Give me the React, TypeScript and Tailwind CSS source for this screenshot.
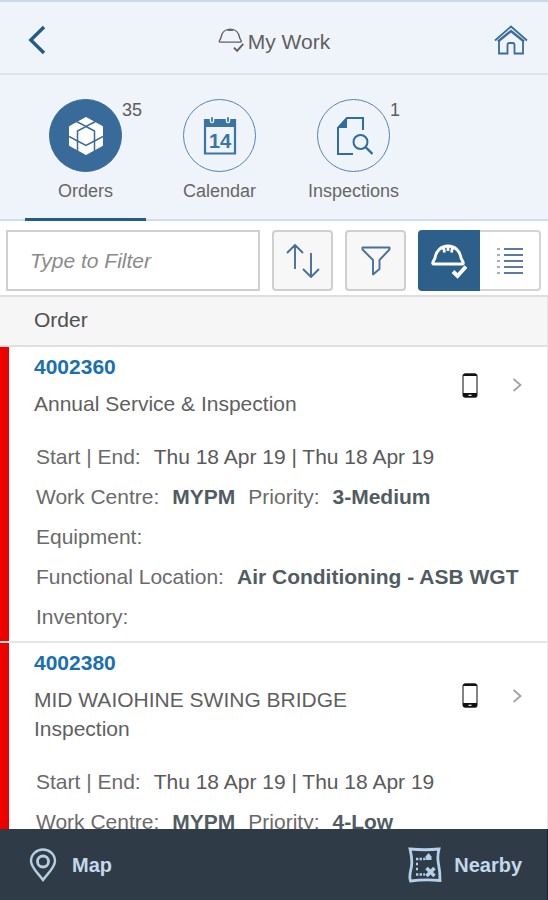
import type { ReactNode } from "react"

type Order = {
  id: string
  title: string
  dates: string
  workCentre: string
  priority: string
  asset?: { equipment: string; location: string; inventory: string }
}

const orders: Order[] = [
  {
    id: "4002360",
    title: "Annual Service & Inspection",
    dates: "Thu 18 Apr 19 | Thu 18 Apr 19",
    workCentre: "MYPM",
    priority: "3-Medium",
    asset: { equipment: "", location: "Air Conditioning - ASB WGT", inventory: "" },
  },
  {
    id: "4002380",
    title: "MID WAIOHINE SWING BRIDGE Inspection",
    dates: "Thu 18 Apr 19 | Thu 18 Apr 19",
    workCentre: "MYPM",
    priority: "4-Low",
  },
]

function BackIcon() {
  return (
    <svg width="18" height="30" viewBox="0 0 18 30" fill="none" stroke="#245a85" strokeWidth="3.4">
      <path d="M16 2 2.8 15 16 28" />
    </svg>
  )
}

function HomeIcon() {
  return (
    <svg width="34" height="30" viewBox="0 0 34 30" fill="none" stroke="#3a6c97" strokeWidth="1.8">
      <path d="M1 15.5 17 1.500l16 14" />
      <path d="M5 16v12.500h8.500V20q0-2 2-2h3q2 0 2 2v8.500H29V16" />
      <path d="M4 16.500 17 6l13 10.500" strokeWidth="2.400" />
    </svg>
  )
}

// plain dome for the title, ribbed one for the toolbar
function HelmetIcon({ size, stroke, ribs }: { size: number; stroke: number; ribs?: boolean }) {
  return (
    <svg width={size} height={size} viewBox="0 0 36 36" fill="none" stroke="currentColor" strokeWidth={stroke} strokeLinejoin="round">
      <path d="M4 15C5 8 10 3 17 3s12 5 13 12l2 4q1 2-1 2H3q-2 0-1-2z" />
      <path d={ribs ? "M12.500 4.500l1 5M17 3v5M21.500 4.500l-1 5" : "M13 4.500h8"} />
      <path d="m22 28.500 4.500 4.500 8.500-9.500" strokeWidth={stroke * 1.4} strokeLinejoin="miter" />
    </svg>
  )
}

function OrdersIcon() {
  return (
    <svg width="34" height="38" viewBox="0 0 34 38">
      <path d="M17 .5 33.500 9.500v19L17 37.500.5 28.500v-19z" fill="#fff" stroke="#fff" strokeLinejoin="round" />
      <g fill="none" stroke="#386b9a" strokeWidth="1.500">
        <path d="M7.500 4.500 17 9.500l9.500-5" />
        <path d="M17 9.500 25.500 14v10L17 28.500 8.500 24V14z" />
        <path d="M0 19.500 8.500 24v10M34 19.500 25.500 24v10" />
      </g>
    </svg>
  )
}

function CalendarIcon() {
  return (
    <svg width="34" height="38" viewBox="0 0 34 38">
      <path d="M2 3h30v33.500H2z" fill="none" stroke="#3a74a6" strokeWidth="2.200" />
      <path d="M1 2h32v8H1z" fill="#3a74a6" />
      <path d="M9 0v4M25 0v4" stroke="#eff4fa" strokeWidth="4.500" strokeLinecap="round" />
      <path d="M9 1v3M25 1v3" stroke="#3a74a6" strokeWidth="1.800" strokeLinecap="round" />
      <text x="17" y="31" textAnchor="middle" fill="#3a74a6" fontSize="20" fontWeight="700">
        14
      </text>
    </svg>
  )
}

function InspectionsIcon() {
  return (
    <svg width="38" height="40" viewBox="0 0 38 40" fill="none" stroke="#2f6c9f" strokeWidth="2">
      <path d="M18 38H3V12L12 2h16v12" />
      <path d="M2 12 12 1v11z" fill="#2f6c9f" stroke="none" />
      <circle cx="25.500" cy="26" r="7" />
      <path d="m30.500 31 7 7" strokeWidth="2.400" />
    </svg>
  )
}

function SortIcon() {
  return (
    <svg width="34" height="34" viewBox="0 0 34 34" fill="none" stroke="#47709a" strokeWidth="1.900">
      <path d="M9 25V2M1 9l8-8 8 8M25 9v23M17 25l8 8 8-8" />
    </svg>
  )
}

function FunnelIcon() {
  return (
    <svg width="30" height="30" viewBox="0 0 30 30" fill="none" stroke="#47709a" strokeWidth="1.900" strokeLinejoin="round">
      <path d="M1.500 1.500h27v2L18.500 14v9L12 28.500V14L1.500 3.500z" />
    </svg>
  )
}

function ListIcon() {
  return (
    <svg width="26" height="30" viewBox="0 0 26 30" stroke="#5d7ba0" strokeWidth="2">
      <path d="M0 3h3M0 9h3M0 15h3M0 21h3M0 27h3" strokeOpacity="0.600" />
      <path d="M7 3h19M7 9h19M7 15h19M7 21h19M7 27h19" />
    </svg>
  )
}

function PhoneIcon() {
  return (
    <svg width="16" height="25" viewBox="0 0 16 25">
      <rect x="1" y="1" width="14" height="23" rx="2" fill="#fff" stroke="#333" strokeWidth="1.200" />
      <path d="M1 3q0-2.500 2-2.500h10q2 0 2 2.500z" fill="#111" />
      <path d="M1 20h14v2q0 2.500-2 2.500H3q-2 0-2-2.500z" fill="#111" />
      <path d="M6.500 22.300h3" stroke="#fff" strokeWidth="1.200" />
    </svg>
  )
}

function ChevronIcon() {
  return (
    <svg width="10" height="14" viewBox="0 0 10 14" fill="none" stroke="#a3a3a3" strokeWidth="1.800">
      <path d="m1.500 1 7 6-7 6" />
    </svg>
  )
}

function PinIcon() {
  return (
    <svg width="28" height="34" viewBox="0 0 28 34" fill="none" stroke="#b8cde0" strokeWidth="2.400">
      <path d="M14 32C9 25 2 19.500 2 13a12 11.500 0 0 1 24 0c0 6.500-7 12-12 19z" />
      <circle cx="14" cy="13.500" r="5.500" strokeWidth="2.800" />
    </svg>
  )
}

function NearbyIcon() {
  return (
    <svg width="34" height="36" viewBox="0 0 34 36" fill="none" stroke="#b4d0ea">
      <path d="M2 2q15 1.500 29 0-2 8-.5 15T32 33.500Q17 32 2.500 34 1 30 3 22T2 2z" strokeWidth="2.800" />
      <path d="M8 12h9M8 17h2M8 22h2M8 27.500h9" strokeWidth="2.400" strokeDasharray="2.400 1.200" />
      <path d="M17.500 13V9.500l3-3.500 3 3.500V13z" fill="#b4d0ea" stroke="none" />
      <path d="m18.500 21 8 8M26.500 21l-8 8" strokeWidth="3.600" />
    </svg>
  )
}

function Tab({ label, count, active, children }: { label: string; count?: string; active?: boolean; children: ReactNode }) {
  return (
    <button
      role="tab"
      aria-selected={!!active}
      className={`flex w-[121px] flex-col items-center border-b-3 pt-6 pb-4 ${active ? "border-[#205d8c]" : "border-transparent"}`}
    >
      <span
        className={`relative flex size-[73px] items-center justify-center rounded-full border ${
          active ? "border-[#386b9a] bg-[#386b9a]" : "border-[#5585b3]"
        }`}
      >
        {children}
        {count && <span className="absolute top-0 left-full pl-px text-[18px] leading-5 text-[#5c5c5c]">{count}</span>}
      </span>
      <span className="mt-2 text-[18px] leading-[22px] text-[#666]">{label}</span>
    </button>
  )
}

function Row({ label, children }: { label: string; children?: ReactNode }) {
  return (
    <div className="flex h-10 items-center gap-[13px] whitespace-nowrap">
      <span>{label}</span>
      {children}
    </div>
  )
}

function OrderItem({ order }: { order: Order }) {
  return (
    <li className="border-b-2 border-[#e5e5e5]">
      <article className="border-l-9 border-[#ee0000] pr-[25px] pb-1 pl-[25px]">
        <div className="flex items-center py-[5px]">
          <div className="min-w-0 flex-1">
            <a href="#" className="block leading-[29px] font-bold text-[#1a6fb0]">
              {order.id}
            </a>
            <h2 className="mt-2 leading-[29px] text-[#5f5f5f]">{order.title}</h2>
          </div>
          <div className="flex w-[60px] justify-center">
            <PhoneIcon />
          </div>
          <button aria-label={`Open ${order.id}`} className="ml-3">
            <ChevronIcon />
          </button>
        </div>
        <div className="mt-3.5 overflow-hidden pl-0.5 text-[#6a6a6a]">
          <Row label="Start | End:">
            <span className="text-[#5a5a5a]">{order.dates}</span>
          </Row>
          <Row label="Work Centre:">
            <b className="text-[#515c62]">{order.workCentre}</b>
            <span>Priority:</span>
            <b className="text-[#515c62]">{order.priority}</b>
          </Row>
          {order.asset && (
            <>
              <Row label="Equipment:">{order.asset.equipment}</Row>
              <Row label="Functional Location:">
                <b className="text-[#515c62]">{order.asset.location}</b>
              </Row>
              <Row label="Inventory:">{order.asset.inventory}</Row>
            </>
          )}
        </div>
      </article>
    </li>
  )
}

export default function App() {
  return (
    <div className="flex h-screen flex-col bg-white font-['Liberation_Sans',Arial,sans-serif] text-[21px] leading-7">
      <header className="flex h-[75px] shrink-0 items-center border-t-2 border-b-2 border-t-[#cbd8ea] border-b-[#dbe4ef] bg-[#eff4fa] pt-1 pr-5 pl-7">
        <button aria-label="Back" className="flex w-[34px]">
          <BackIcon />
        </button>
        <h1 className="flex flex-1 items-center justify-center gap-1 pr-2 text-[#5f5f5f]">
          <HelmetIcon size={26} stroke={1.9} />
          <span className="pt-1">My Work</span>
        </h1>
        <button aria-label="Home">
          <HomeIcon />
        </button>
      </header>

      <div role="tablist" className="flex shrink-0 gap-[13px] bg-[#eff4fa] pl-[25px] shadow-[inset_0_-2px_0_#cfdded]">
        <Tab label="Orders" count="35" active>
          <OrdersIcon />
        </Tab>
        <Tab label="Calendar">
          <CalendarIcon />
        </Tab>
        <Tab label="Inspections" count="1">
          <InspectionsIcon />
        </Tab>
      </div>

      <div className="flex shrink-0 gap-3 border-b-2 border-[#dedede] pt-[9px] pr-[7px] pb-1 pl-1.5">
        <input
          type="text"
          aria-label="Filter orders"
          placeholder="Type to Filter"
          className="h-[61px] min-w-0 flex-1 border-2 border-[#cfcfcf] px-[22px] placeholder:text-[#8a8a8a] placeholder:italic"
        />
        <button aria-label="Sort" className="flex size-[61px] items-center justify-center rounded border-2 border-[#cfcfcf] bg-[#f7f7f7]">
          <SortIcon />
        </button>
        <button aria-label="Filter" className="flex size-[61px] items-center justify-center rounded border-2 border-[#cfcfcf] bg-[#f7f7f7]">
          <FunnelIcon />
        </button>
        <div className="flex">
          <button aria-label="My work" aria-pressed="true" className="flex h-[61px] w-[62px] items-center justify-center rounded-l bg-[#2d5f8b] text-white">
            <HelmetIcon size={36} stroke={2.8} ribs />
          </button>
          <button aria-label="List" aria-pressed="false" className="flex size-[61px] items-center justify-center rounded-r border-2 border-l-0 border-[#d4d4d4]">
            <ListIcon />
          </button>
        </div>
      </div>

      <main className="flex min-h-0 flex-1 flex-col border-r border-[#e5e5e5]">
        <div className="shrink-0 border-b-2 border-[#e0e0e0] bg-[#f6f6f6] px-[34px] pt-[9px] pb-[11px] text-[#4f4f4f]">Order</div>
        <ul className="min-h-0 flex-1 overflow-y-auto [scrollbar-width:none]">
          {orders.map((order) => (
            <OrderItem key={order.id} order={order} />
          ))}
        </ul>
      </main>

      <footer className="flex h-[71px] shrink-0 items-center justify-between border-r border-[#1c2433] bg-[#2f3c48] pr-[25px] pl-[29px] text-[20px] font-bold text-[#c3d8ea]">
        <button className="flex items-center gap-[15px]">
          <PinIcon />
          Map
        </button>
        <button className="flex items-center gap-3">
          <NearbyIcon />
          Nearby
        </button>
      </footer>
    </div>
  )
}
